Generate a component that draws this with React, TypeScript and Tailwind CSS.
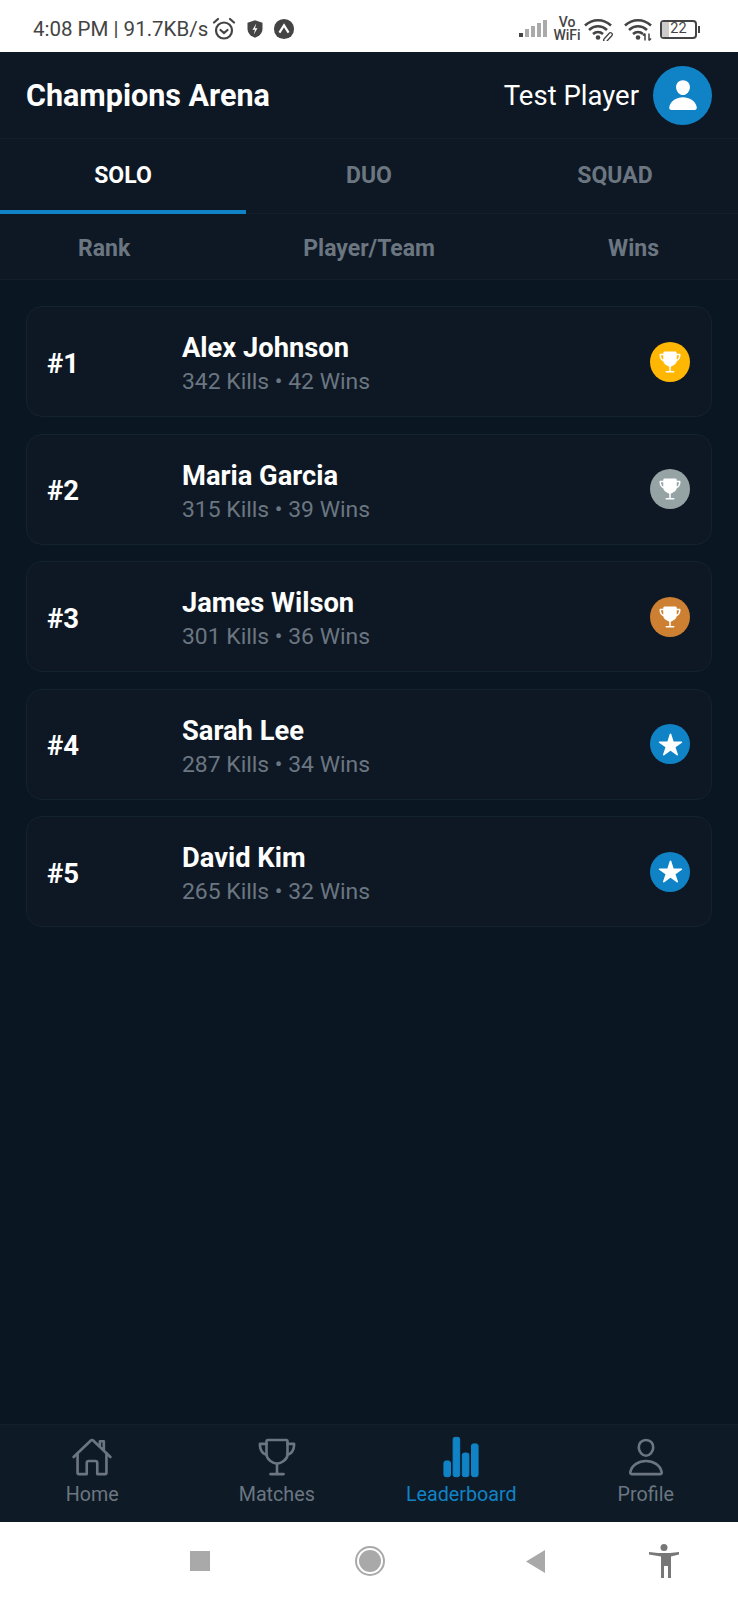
import { IoHomeOutline, IoPerson, IoPersonOutline, IoStar, IoStatsChart, IoTrophy, IoTrophyOutline } from "react-icons/io5";

const players = [
  { rank: 1, name: "Alex Johnson", stats: "342 Kills • 42 Wins", badge: "bg-[#ffb703]", trophy: true },
  { rank: 2, name: "Maria Garcia", stats: "315 Kills • 39 Wins", badge: "bg-[#95a3a5]", trophy: true },
  { rank: 3, name: "James Wilson", stats: "301 Kills • 36 Wins", badge: "bg-[#cd7f32]", trophy: true },
  { rank: 4, name: "Sarah Lee", stats: "287 Kills • 34 Wins", badge: "bg-[#1083c6]", trophy: false },
  { rank: 5, name: "David Kim", stats: "265 Kills • 32 Wins", badge: "bg-[#1083c6]", trophy: false },
];

function WifiIcon({ className, link }: { className?: string; link?: boolean }) {
  return (
    <svg viewBox="0 0 30 22" className={className} fill="none" stroke="#444" strokeWidth="2.6">
      <path d="M1 7C8.500 0 19.500 0 27 7" />
      <path d="M5 11.500C10.500 6.500 17.500 6.500 23 11.500" />
      <path d="M9 15.500C12 13 16 13 19 15.500" />
      <circle cx="14" cy="19" r="2.300" fill="#444" stroke="none" />
      {link ? (
        <path d="M20 20.500l5-5.500a1.800 1.800 0 0 1 3 2l-5 5.500a1.800 1.800 0 0 1-3-2z" strokeWidth="1.300" />
      ) : (
        <path d="M21 15v7M25 15v7M21 15l-2 2M25 22l2-2" strokeWidth="1.500" />
      )}
    </svg>
  );
}

function StatusBar() {
  return (
    <div className="flex h-[52px] shrink-0 items-center justify-between bg-white pl-[33px] pr-[38px] pt-[6px] text-[#444]">
      <div className="flex items-center">
        <span className="text-[20.500px] leading-none">4:08 PM | 91.7KB/s</span>
        <svg viewBox="0 0 24 24" className="ml-[4px] h-[24px] w-[24px]" fill="none" stroke="#444" strokeWidth="2.200" strokeLinecap="round">
          <circle cx="12" cy="13.500" r="8" />
          <path d="M8.500 13l3.500 3 3.500-3M2 5.500L6 2M22 5.500L18 2" />
        </svg>
        <svg viewBox="0 0 24 24" className="ml-[9px] h-[20px] w-[20px]" fill="#444">
          <path d="M12 1.500l9 3v7c0 5.500-3.800 9.500-9 11-5.200-1.500-9-5.500-9-11v-7z" />
          <path d="M13.500 5.500l-4.500 7.500h3l-1.500 5.500 4.500-7.500h-3z" fill="#fff" />
        </svg>
        <svg viewBox="0 0 24 24" className="ml-[8px] h-[22px] w-[22px]">
          <circle cx="12" cy="12" r="11" fill="#444" />
          <path d="M7 16l5-8 5 8" fill="none" stroke="#fff" strokeWidth="2.400" />
        </svg>
      </div>
      <div className="flex items-center">
        <svg viewBox="0 0 30 20" className="h-[20px] w-[30px]">
          <rect x="0" y="14" width="4" height="4" fill="#444" />
          <rect x="6" y="10" width="4" height="8" fill="#aaa" />
          <rect x="12" y="7" width="4" height="11" fill="#aaa" />
          <rect x="18" y="4" width="4" height="14" fill="#aaa" />
          <rect x="24" y="1" width="4" height="17" fill="#aaa" />
        </svg>
        <div className="ml-[5px] flex w-[26px] flex-col items-center text-[14px] font-medium leading-[13px]">
          <span>Vo</span>
          <span>WiFi</span>
        </div>
        <WifiIcon link className="ml-[4px] h-[23px] w-[30px]" />
        <WifiIcon className="ml-[10px] h-[23px] w-[30px]" />
        <div className="ml-[6px] flex items-center">
          <div className="relative flex h-[19px] w-[37px] items-center justify-center rounded-[4px] border-2 border-[#444] text-[14.500px] leading-none">
            <div className="absolute inset-y-0 left-0 w-[7px] bg-[#ccc]" />
            <span className="relative">22</span>
          </div>
          <div className="ml-[1px] h-[7px] w-[2px] bg-[#444]" />
        </div>
      </div>
    </div>
  );
}

function NavItem({ icon, label, active }: { icon: React.ReactNode; label: string; active?: boolean }) {
  return (
    <div className={`flex flex-1 flex-col items-center ${active ? "text-[#1083c6]" : "text-[#6b7681]"}`}>
      {icon}
      <span className="mt-[5px] text-[19.700px] leading-[24px]">{label}</span>
    </div>
  );
}

export default function App() {
  return (
    <div className="flex h-[1600px] w-[738px] flex-col overflow-hidden bg-[#0a1621] font-['Roboto',sans-serif]">
      <StatusBar />

      {/* Header */}
      <div className="flex h-[87px] shrink-0 items-center justify-between border-b border-[#13202c] bg-[#0e1824] pl-[26px] pr-[26px]">
        <h1 className="pt-[2px] text-[30.500px] font-bold text-white">Champions Arena</h1>
        <div className="flex items-center gap-[14px]">
          <span className="pt-[2px] text-[27.500px] text-white">Test Player</span>
          <div className="flex h-[59px] w-[59px] items-center justify-center rounded-full bg-[#1083c6]">
            <IoPerson size={34} color="#fff" />
          </div>
        </div>
      </div>

      {/* Tabs */}
      <div className="flex h-[75px] shrink-0 border-b border-[#13202c] bg-[#0e1824] text-[23px] font-bold text-[#6b7681]">
        <div className="relative flex flex-1 items-center justify-center text-white">
          SOLO
          <div className="absolute bottom-[-1px] left-0 right-0 h-[4px] bg-[#1083c6]" />
        </div>
        <div className="flex flex-1 items-center justify-center">DUO</div>
        <div className="flex flex-1 items-center justify-center">SQUAD</div>
      </div>

      {/* Column headers */}
      <div className="flex h-[66px] shrink-0 items-center justify-between border-b border-[#13202c] bg-[#0e1824] pl-[78px] pr-[79px] pt-[6px] text-[23px] font-bold text-[#6b7681]">
        <span>Rank</span>
        <span>Player/Team</span>
        <span>Wins</span>
      </div>

      {/* List */}
      <div className="flex flex-1 flex-col gap-[16.500px] px-[26px] pt-[26px]">
        {players.map((p) => (
          <div key={p.rank} className="flex h-[111px] items-center rounded-[16px] border border-[#13232f] bg-[#0e1824] pl-[20px] pr-[21px]">
            <span className="w-[135px] pt-[4px] text-[27.500px] font-bold text-white">#{p.rank}</span>
            <div className="flex-1 pt-[6px]">
              <div className="text-[27.300px] font-bold leading-[32px] text-white">{p.name}</div>
              <div className="mt-[3px] text-[22.900px] leading-[30px] text-[#6b7681]">{p.stats}</div>
            </div>
            <div className={`flex h-[40px] w-[40px] items-center justify-center rounded-full ${p.badge}`}>
              {p.trophy ? <IoTrophy size={24} color="#fff" /> : <IoStar size={25} color="#fff" />}
            </div>
          </div>
        ))}
      </div>

      {/* Bottom nav */}
      <div className="flex h-[98px] shrink-0 items-start border-t border-[#13202c] bg-[#0e1a26] pt-[11px]">
        <NavItem icon={<IoHomeOutline size={42} />} label="Home" />
        <NavItem icon={<IoTrophyOutline size={42} />} label="Matches" />
        <NavItem icon={<IoStatsChart size={42} strokeWidth={12} />} label="Leaderboard" active />
        <NavItem icon={<IoPersonOutline size={42} />} label="Profile" />
      </div>

      {/* Android nav bar */}
      <div className="flex h-[78px] shrink-0 items-center bg-white pl-[190px]">
        <div className="h-[20px] w-[20px] bg-[#a9a9a9]" />
        <div className="ml-[145px] flex h-[30px] w-[30px] items-center justify-center rounded-full border-2 border-[#a9a9a9]">
          <div className="h-[22px] w-[22px] rounded-full bg-[#a9a9a9]" />
        </div>
        <svg viewBox="0 0 20 24" className="ml-[141px] h-[23px] w-[19px]" fill="#a9a9a9">
          <path d="M20 0v24L0 12z" />
        </svg>
        <svg viewBox="0 0 30 34" className="ml-[104px] h-[34px] w-[30px]" fill="#777">
          <circle cx="15" cy="3.500" r="3.500" />
          <path d="M0 8l9 1h12l9-1v2.500l-8 2v7.500v14h-3v-12h-4v12h-3v-14v-7.500l-12-2z" />
        </svg>
      </div>
    </div>
  );
}
